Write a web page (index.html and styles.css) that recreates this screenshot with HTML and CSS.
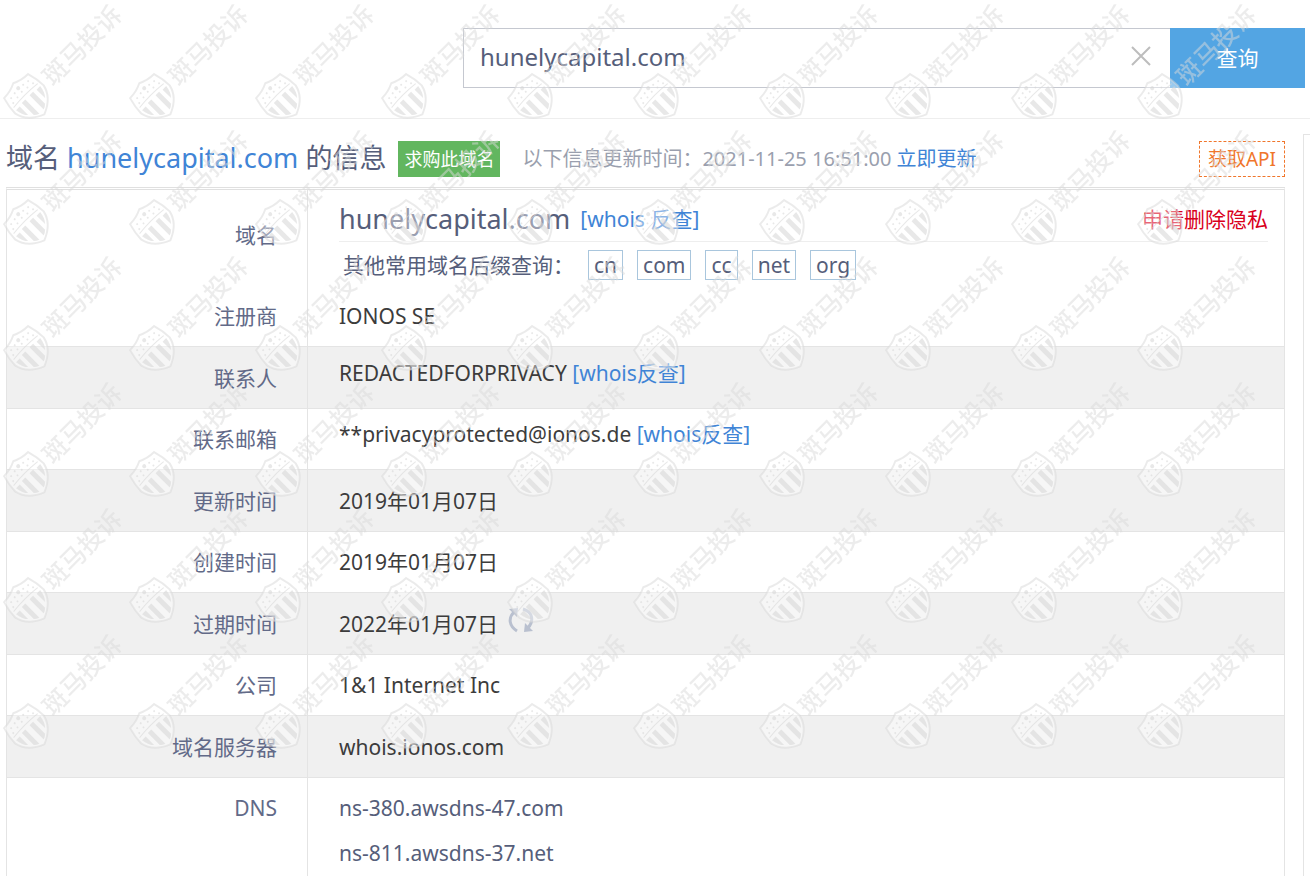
FILE: index.html
```
<!DOCTYPE html>
<html lang="zh-CN">
<head>
	<meta charset="utf-8">
	<meta name="viewport" content="width=device-width, initial-scale=1">
	<title>hunelycapital.com 域名信息</title>
	<link rel="stylesheet" href="styles.css">
</head>
<body>

	<header class="top">
		<form class="search" onsubmit="return false">
			<div class="search-box">
				<input type="text" class="search-input" id="host" value="hunelycapital.com" aria-label="域名">
				<button type="button" class="clear" id="clear" aria-label="清空">
					<svg width="20" height="20" viewBox="0 0 20 20"><path d="M1 1L19 19M19 1L1 19" stroke="#bdbdbd" stroke-width="2" fill="none"/></svg>
				</button>
			</div>
			<button type="submit" class="search-btn">查询</button>
		</form>
	</header>

	<div class="page">
		<main class="main">
			<div class="title-bar">
				<h1 class="title">域名 <a href="#">hunelycapital.com</a> 的信息</h1>
				<button type="button" class="buy">求购此域名</button>
				<p class="updated">以下信息更新时间：2021-11-25 16:51:00 <a href="#">立即更新</a></p>
				<a href="#" class="api">获取API</a>
			</div>

			<table class="info">
				<tr class="row-domain">
					<th scope="row">域名</th>
					<td>
						<div class="domain-line">
							<span class="domain">hunelycapital.com</span>
							<a href="#">[whois 反查]</a>
							<a href="#" class="privacy">申请删除隐私</a>
						</div>
						<div class="suffix-line">
							<span class="suffix-label">其他常用域名后缀查询：</span>
							<a href="#" class="suffix">cn</a>
							<a href="#" class="suffix">com</a>
							<a href="#" class="suffix">cc</a>
							<a href="#" class="suffix">net</a>
							<a href="#" class="suffix">org</a>
						</div>
					</td>
				</tr>
				<tr class="row-plain">
					<th scope="row">注册商</th>
					<td>IONOS SE</td>
				</tr>
				<tr class="gray raised">
					<th scope="row">联系人</th>
					<td>REDACTEDFORPRIVACY <a href="#">[whois反查]</a></td>
				</tr>
				<tr class="raised">
					<th scope="row">联系邮箱</th>
					<td>**privacyprotected@ionos.de <a href="#">[whois反查]</a></td>
				</tr>
				<tr class="gray">
					<th scope="row">更新时间</th>
					<td>2019年01月07日</td>
				</tr>
				<tr>
					<th scope="row">创建时间</th>
					<td>2019年01月07日</td>
				</tr>
				<tr class="gray">
					<th scope="row">过期时间</th>
					<td>
						<span class="expire">2022年01月07日
							<button type="button" class="refresh" aria-label="刷新">
								<svg width="26" height="26" viewBox="0 0 26 26">
									<g fill="none" stroke="#b9c0cf" stroke-width="3">
										<path d="M9 24C1 19 0 11 6 5"/>
										<path d="M15 2C25 5 26 14 20 21"/>
									</g>
									<path d="M1 2L10 1L9 10ZM25 24L16 25L17 16Z" fill="#b9c0cf"/>
								</svg>
							</button>
						</span>
					</td>
				</tr>
				<tr>
					<th scope="row">公司</th>
					<td>1&amp;1 Internet Inc</td>
				</tr>
				<tr class="gray">
					<th scope="row">域名服务器</th>
					<td>whois.ionos.com</td>
				</tr>
				<tr class="row-dns">
					<th scope="row">DNS</th>
					<td>
						<ul class="dns">
							<li>ns-380.awsdns-47.com</li>
							<li>ns-811.awsdns-37.net</li>
						</ul>
					</td>
				</tr>
			</table>
		</main>
		<aside class="side"></aside>
	</div>

	<!-- watermark over the whole page -->
	<svg class="watermark" width="1260" height="756" aria-hidden="true">
		<defs>
			<pattern id="mark" width="126" height="126" patternUnits="userSpaceOnUse">
				<g transform="translate(26 96) rotate(-45)">
					<path d="M-17 -14Q-8 -14 0 -18Q8 -14 17 -14Q20 -4 20 5Q17 19 0 26Q-17 19 -20 5Q-20 -4 -17 -14Z" fill="#fff" fill-opacity=".4" stroke="#d8d8d8" stroke-opacity=".5" stroke-width="2"/>
					<g fill="#d4d4d4" fill-opacity=".55">
						<circle cx="-12" cy="-9" r="1"/><circle cx="-6" cy="-10" r="1"/><circle cx="0" cy="-11" r="2"/><circle cx="6" cy="-10" r="1"/><circle cx="12" cy="-9" r="1"/>
						<circle cx="-14" cy="-4" r="1"/><circle cx="-7" cy="-5" r="1"/><circle cx="0" cy="-6" r="1"/><circle cx="7" cy="-5" r="1"/><circle cx="14" cy="-4" r="1"/>
						<path d="M-17 -1Q0 -3 17 -1V0Q0 -2 -17 0Z"/>
						<path d="M-17 3H-12V15Q-16 11 -17 3ZM-8 2H-3V22Q-6 21 -8 19ZM3 2H8V19Q6 21 3 22ZM12 3H17Q16 11 12 15Z"/>
					</g>
				</g>
				<text class="mark-text" transform="translate(53 87) rotate(-45)">斑马投诉</text>
			</pattern>
		</defs>
		<rect width="1260" height="756" fill="url(#mark)"/>
	</svg>

	<script type="text/javascript">
		document.getElementById('clear').onclick = function () {
			var host = document.getElementById('host');
			host.value = '';
			host.focus();
		};
	</script>

</body>
</html>
```
FILE: styles.css
```
* {
	margin: 0;
	padding: 0;
	box-sizing: border-box;
}
body {
	position: relative;
	height: 100vh;
	overflow: hidden;
	background: #fff;
	color: #3c3c3c;
	font-family: "Noto Sans", "Noto Sans CJK SC", sans-serif;
	font-size: 21px;
	line-height: 30px;
}
a {
	color: #4084d6;
	text-decoration: none;
}
button {
	border: 0;
	background: none;
	font: inherit;
	cursor: pointer;
}
svg {
	display: block;
}

/* search */
.top {
	padding: 28px 5px 30px 463px;
	border-bottom: 1px solid #eee;
}
.search {
	display: flex;
	height: 60px;
}
.search-box {
	display: flex;
	flex: 1;
	align-items: center;
	padding-bottom: 4px;
	border: 1px solid #c5c8d0;
	border-right: 0;
}
.search-input {
	flex: 1;
	min-width: 0;
	height: 100%;
	padding: 0 16px;
	border: 0;
	outline: 0;
	background: none;
	color: #565e7a;
	font: inherit;
	font-size: 24px;
}
.clear {
	padding: 0 19px;
}
.search-btn {
	width: 135px;
	background: #53a5e3;
	color: #fff;
}

/* page */
.page {
	display: flex;
	align-items: stretch;
	gap: 18px;
	padding: 15px 0 0 6px;
}
.main {
	flex: 1;
}
.side {
	width: 7px;
	border-top: 1px solid #e4e4e4;
	border-left: 1px solid #e4e4e4;
}
.title-bar {
	display: flex;
	align-items: center;
	height: 53px;
	padding-bottom: 4px;
}
.title {
	padding-bottom: 2px;
	color: #565e7a;
	font-size: 27px;
	font-weight: 400;
}
.buy {
	height: 36px;
	margin-left: 12px;
	padding: 0 6px;
	background: #62b65f;
	color: #fff;
	font-size: 18px;
}
.updated {
	margin-left: 22px;
	color: #9a9fae;
	font-size: 20px;
}
.api {
	margin-left: auto;
	padding: 2px 8px;
	border: 1px dashed #f0762b;
	color: #f0762b;
	font-size: 19px;
}

/* info table */
.info {
	width: 100%;
	border: 1px solid #e4e4e4;
	border-top: 3px double #e0e0e0;
	border-collapse: separate;
	border-spacing: 0;
	table-layout: fixed;
}
.info th {
	width: 301px;
	height: 61px;
	padding-right: 30px;
	border-right: 1px solid #e4e4e4;
	border-top: 1px solid #e4e4e4;
	color: #626a88;
	font-weight: 400;
	text-align: right;
}
.info td {
	padding: 0 16px 0 31px;
	border-top: 1px solid #e4e4e4;
}
.info .gray {
	background: #f0f0f0;
}
.info .gray th {
	height: 62px;
}
.info .raised td {
	padding-bottom: 10px;
}
.info .row-domain th {
	height: 95px;
	padding-bottom: 6px;
	border-top: 0;
}
.info .row-domain td,
.info .row-plain th,
.info .row-plain td {
	border-top: 0;
}
.info .row-domain td {
	vertical-align: top;
}
.domain-line {
	display: flex;
	align-items: center;
	gap: 10px;
	height: 52px;
	padding-top: 6px;
	border-bottom: 1px solid #eee;
}
.domain {
	color: #565e7a;
	font-size: 27px;
}
.privacy {
	margin-left: auto;
	color: #d9001b;
}
.suffix-line {
	display: flex;
	align-items: center;
	gap: 14px;
	padding: 8px 0 0 4px;
}
.suffix-label {
	color: #565e7a;
}
.suffix {
	padding: 0 5px;
	border: 1px solid #a9c6dd;
	color: #565e7a;
	line-height: 28px;
}
.expire {
	display: flex;
	align-items: center;
	gap: 10px;
}
.refresh {
	padding-bottom: 8px;
}
.info .row-dns th {
	padding-top: 15px;
	vertical-align: top;
}
.info .row-dns td {
	padding-top: 8px;
	padding-bottom: 8px;
}
.dns {
	color: #565e7a;
	line-height: 45px;
	list-style: none;
}

/* watermark */
.watermark {
	position: absolute;
	top: 0;
	left: 0;
	pointer-events: none;
}
.mark-text {
	fill: #dadada;
	fill-opacity: .5;
	font-family: "Noto Sans CJK SC", sans-serif;
	font-size: 25px;
	font-weight: 500;
}
```
